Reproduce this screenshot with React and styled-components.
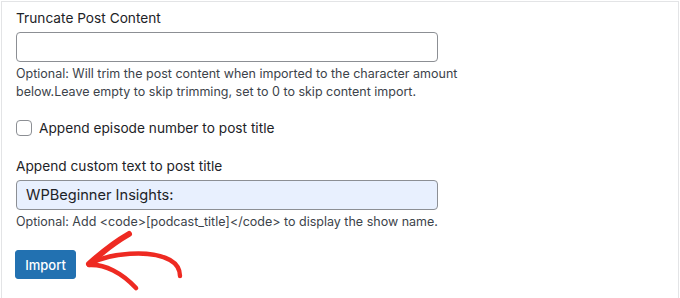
import React from 'react';
import styled, { createGlobalStyle } from 'styled-components';

const GlobalStyle = createGlobalStyle`
  html, body {
    margin: 0;
    padding: 0;
    background: #fff;
  }
  body {
    font-family: Inter, "Liberation Sans", Arial, sans-serif;
    color: #1d2327;
    -webkit-font-smoothing: antialiased;
  }
`;

const Panel = styled.div`
  margin: 1px 1px 0 1px;
  height: 297px;
  box-sizing: border-box;
  border: 1px solid #e3e4e6;
  border-bottom: none;
  padding: 6px 14px 0 14px;
  background: #fff;
`;

const Field = styled.div`
  display: flex;
  flex-direction: column;
  margin-top: ${(p) => p.$gap || 0}px;
`;

const Label = styled.label`
  font-size: 13.7px;
  line-height: 20px;
  color: #1d2327;
`;

const TextInput = styled.input`
  box-sizing: border-box;
  width: 422px;
  height: 30px;
  margin-top: 4px;
  padding: 0 9px;
  border: 1px solid #8c8f94;
  border-radius: 4px;
  background: ${(p) => (p.$filled ? '#e8f0fe' : '#fff')};
  font-family: inherit;
  font-size: 14.6px;
  color: #1d2327;
  outline: none;
`;

const Help = styled.p`
  margin: 3px 0 0;
  font-size: 12.5px;
  line-height: 18px;
  color: #3c434a;
`;

const CheckRow = styled.label`
  display: flex;
  align-items: center;
  gap: 7px;
  height: 20px;
  margin-top: 17px;
  font-size: 13.7px;
  color: #1d2327;
`;

const Box = styled.span`
  box-sizing: border-box;
  width: 16px;
  height: 16px;
  border: 1px solid #8c8f94;
  border-radius: 4px;
  background: #fff;
`;

const Actions = styled.div`
  position: relative;
  margin-top: 19px;
  height: 29px;
`;

const Button = styled.button`
  box-sizing: border-box;
  height: 29px;
  width: 61px;
  margin-left: -1px;
  border: 1px solid #2271b1;
  border-radius: 3px;
  background: #2271b1;
  color: #fff;
  font-family: inherit;
  font-size: 13px;
  font-weight: 500;
  padding: 0;
  cursor: pointer;
`;

const Arrow = styled.svg`
  position: absolute;
  left: 64px;
  top: -22px;
  width: 110px;
  height: 70px;
  overflow: visible;
`;

export default function App() {
  return (
    <>
      <GlobalStyle />
      <Panel>
        <Field>
          <Label>Truncate Post Content</Label>
          <TextInput type="text" />
        </Field>
        <Help>
          Optional: Will trim the post content when imported to the character amount
          <br />
          below.Leave empty to skip trimming, set to 0 to skip content import.
        </Help>

        <CheckRow>
          <Box />
          Append episode number to post title
        </CheckRow>

        <Field $gap={18}>
          <Label>Append custom text to post title</Label>
          <TextInput type="text" $filled defaultValue="WPBeginner Insights:" />
        </Field>
        <Help>Optional: Add &lt;code&gt;[podcast_title]&lt;/code&gt; to display the show name.</Help>

        <Actions>
          <Button>Import</Button>
          <Arrow viewBox="0 0 110 70">
            <g fill="none" stroke="#ee2a22" strokeLinecap="round" strokeLinejoin="round">
              <path d="M49 6 C 35 14, 20 26, 9 36" strokeWidth="6" />
              <path d="M9 36 C 30 25, 70 21, 90 32 C 97 36, 100 42, 100 48" strokeWidth="4.4" />
              <path d="M9 37 C 25 36, 42 45, 56 60" strokeWidth="4.6" />
            </g>
          </Arrow>
        </Actions>
      </Panel>
    </>
  );
}
